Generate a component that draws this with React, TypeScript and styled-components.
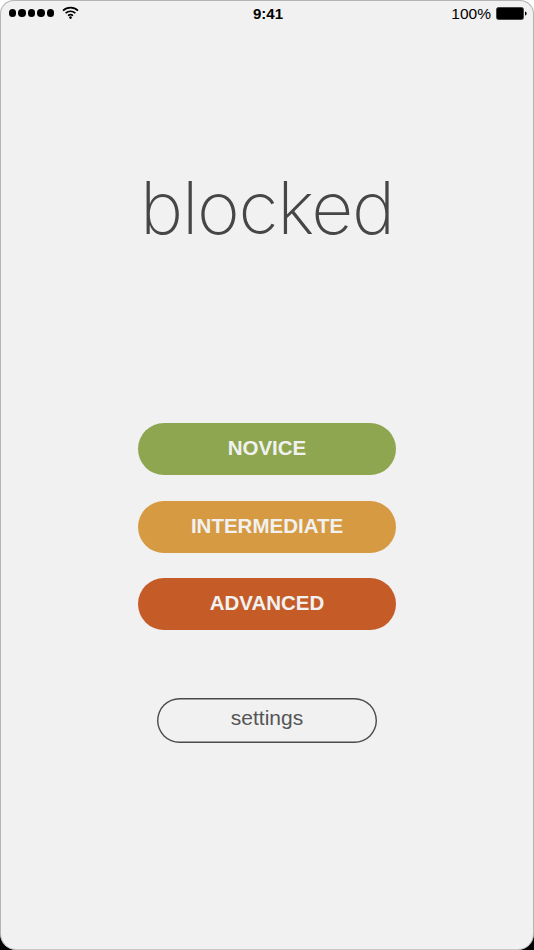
import React from 'react'
import styled, { createGlobalStyle } from 'styled-components'

const GlobalStyle = createGlobalStyle`
  html, body {
    margin: 0;
    padding: 0;
    background: #000;
  }
`

const Frame = styled.div`
  width: 534px;
  height: 950px;
  background: linear-gradient(#fff 50%, #000 50%);
  overflow: hidden;
`

const Screen = styled.div`
  box-sizing: border-box;
  width: 534px;
  height: 950px;
  display: flex;
  flex-direction: column;
  align-items: center;
  background: #f1f1f1;
  border: 1px solid #b4b4b4;
  border-bottom-color: #c8c8c8;
  border-radius: 14px 14px 16px 16px;
  font-family: 'Liberation Sans', Arial, sans-serif;
`

const StatusBar = styled.div`
  align-self: stretch;
  height: 24px;
  display: grid;
  grid-template-columns: 1fr auto 1fr;
  align-items: center;
  padding: 0 6px 0 8px;
  color: #000;
`

const StatusLeft = styled.div`
  display: flex;
  align-items: center;
  gap: 8px;
`

const Dots = styled.div`
  display: flex;
  gap: 2px;
`

const Dot = styled.span`
  width: 7.4px;
  height: 7.4px;
  border-radius: 50%;
  background: #000;
`

const WifiSlot = styled.span`
  display: flex;
  margin-top: -2px;
`

const Time = styled.div`
  font-size: 15px;
  font-weight: 700;
`

const StatusRight = styled.div`
  display: flex;
  align-items: center;
  justify-content: flex-end;
  gap: 5px;
  padding-top: 1px;
  font-size: 15.5px;
`

const Title = styled.h1`
  margin: 138px 0 0;
  height: 90px;
  font-family: Inter, 'Liberation Sans', sans-serif;
  font-weight: 200;
  font-size: 73px;
  line-height: 90px;
  letter-spacing: -1.3px;
  color: #464646;
`

const Levels = styled.div`
  margin-top: 170px;
  display: flex;
  flex-direction: column;
  gap: 25.5px;
`

const LevelButton = styled.button<{ $color: string }>`
  width: 258px;
  height: 52px;
  padding: 0 0 2px;
  border: 0;
  border-radius: 26px;
  background: ${(props) => props.$color};
  color: #f1f1f1;
  font-family: inherit;
  font-size: 20.5px;
  font-weight: 700;
`

const SettingsButton = styled.button`
  box-sizing: border-box;
  margin-top: 68px;
  width: 220px;
  height: 44.5px;
  padding: 0 0 5px;
  border: 0;
  border-radius: 23px;
  box-shadow: inset 0 0 0 1.4px #4a4a4a;
  background: transparent;
  color: #555;
  font-family: inherit;
  font-size: 21px;
`

const WifiIcon = () => (
  <svg width="17" height="13" viewBox="0 0 17 13">
    <g fill="none" stroke="#000" strokeWidth="1.6">
      <path d="M1 4.6 C5.2 0.6 11.8 0.6 16 4.6" />
      <path d="M3.6 7.2 C6.4 4.6 10.6 4.6 13.4 7.2" />
      <path d="M6 9.6 C7.5 8.4 9.5 8.4 11 9.6" />
    </g>
    <circle cx="8.5" cy="11.6" r="1.3" fill="#000" />
  </svg>
)

const BatteryIcon = () => (
  <svg width="31" height="13" viewBox="0 0 31 13">
    <rect x="0.5" y="0.5" width="27" height="12" rx="2" fill="#000" stroke="#444" />
    <path d="M29 4.5 C30.2 4.8 30.6 5.5 30.6 6.5 C30.6 7.5 30.2 8.2 29 8.5 Z" fill="#000" />
  </svg>
)

const levels = [
  { label: 'NOVICE', color: '#8ea650' },
  { label: 'INTERMEDIATE', color: '#d69a42' },
  { label: 'ADVANCED', color: '#c55c28' },
]

export default function App() {
  return (
    <Frame>
      <GlobalStyle />
      <Screen>
        <StatusBar>
          <StatusLeft>
            <Dots>
              {[0, 1, 2, 3, 4].map((i) => (
                <Dot key={i} />
              ))}
            </Dots>
            <WifiSlot>
              <WifiIcon />
            </WifiSlot>
          </StatusLeft>
          <Time>9:41</Time>
          <StatusRight>
            100%
            <BatteryIcon />
          </StatusRight>
        </StatusBar>
        <Title>blocked</Title>
        <Levels>
          {levels.map(({ label, color }) => (
            <LevelButton key={label} $color={color}>
              {label}
            </LevelButton>
          ))}
        </Levels>
        <SettingsButton>settings</SettingsButton>
      </Screen>
    </Frame>
  )
}
